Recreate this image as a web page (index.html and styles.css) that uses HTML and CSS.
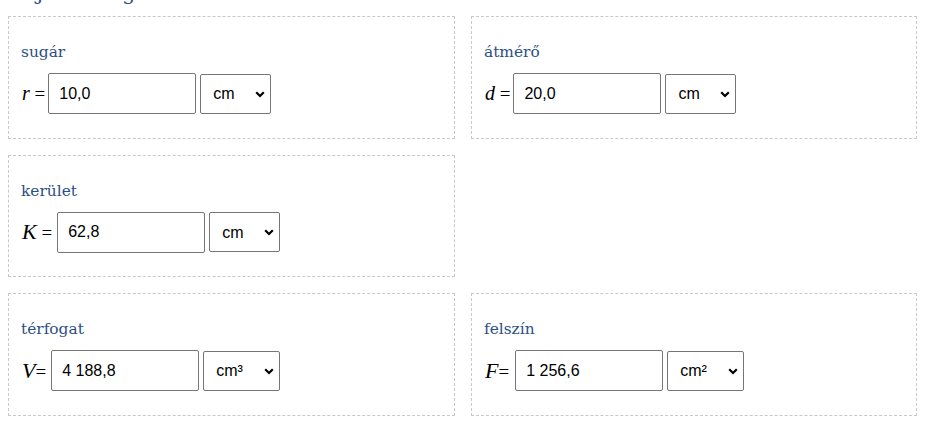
FILE: index.html
```html
<!DOCTYPE html>
<html lang="hu">
<head>
<meta charset="utf-8">
<title>Gömb</title>
<link rel="stylesheet" href="styles.css">
</head>
<body>
<h2 class="title">Adjunk meg</h2>
<div class="grid">
  <div class="card">
    <div class="label">sugár</div>
    <div class="row">
      <span class="eq"><i>r</i> =</span>
      <input class="num" type="text" value="10,0">
      <span class="sel">
        <select class="unit"><option>cm</option><option>mm</option><option>m</option></select>
        <svg class="chev" viewBox="0 0 10 7" width="10" height="7"><path d="M1.2 1.3 L5 5 L8.8 1.3" fill="none" stroke="#000" stroke-width="2.2"/></svg>
      </span>
    </div>
  </div>
  <div class="card">
    <div class="label">átmérő</div>
    <div class="row">
      <span class="eq"><i>d</i> =</span>
      <input class="num" type="text" value="20,0">
      <span class="sel">
        <select class="unit"><option>cm</option><option>mm</option><option>m</option></select>
        <svg class="chev" viewBox="0 0 10 7" width="10" height="7"><path d="M1.2 1.3 L5 5 L8.8 1.3" fill="none" stroke="#000" stroke-width="2.2"/></svg>
      </span>
    </div>
  </div>
  <div class="card">
    <div class="label">kerület</div>
    <div class="row">
      <span class="eq cap"><i>K</i> =</span>
      <input class="num" type="text" value="62,8">
      <span class="sel">
        <select class="unit"><option>cm</option><option>mm</option><option>m</option></select>
        <svg class="chev" viewBox="0 0 10 7" width="10" height="7"><path d="M1.2 1.3 L5 5 L8.8 1.3" fill="none" stroke="#000" stroke-width="2.2"/></svg>
      </span>
    </div>
  </div>
  <div class="empty"></div>
  <div class="card">
    <div class="label">térfogat</div>
    <div class="row">
      <span class="eq cap"><i>V</i>=</span>
      <input class="num" type="text" value="4 188,8">
      <span class="sel">
        <select class="unit wide"><option>cm³</option><option>mm³</option><option>m³</option></select>
        <svg class="chev" viewBox="0 0 10 7" width="10" height="7"><path d="M1.2 1.3 L5 5 L8.8 1.3" fill="none" stroke="#000" stroke-width="2.2"/></svg>
      </span>
    </div>
  </div>
  <div class="card">
    <div class="label">felszín</div>
    <div class="row">
      <span class="eq cap wider"><i>F</i>=</span>
      <input class="num" type="text" value="1 256,6">
      <span class="sel">
        <select class="unit wide"><option>cm²</option><option>mm²</option><option>m²</option></select>
        <svg class="chev" viewBox="0 0 10 7" width="10" height="7"><path d="M1.2 1.3 L5 5 L8.8 1.3" fill="none" stroke="#000" stroke-width="2.2"/></svg>
      </span>
    </div>
  </div>
</div>
</body>
</html>
```
FILE: styles.css
```css
html, body {
  margin: 0;
  padding: 0;
  background: #fff;
}
body {
  padding: 0 8px;
  overflow: hidden;
}
.title {
  font-family: "DejaVu Serif", serif;
  font-weight: normal;
  font-size: 21px;
  line-height: 24px;
  color: #2c4f85;
  margin: -19px 0 11px 0;
}
.grid {
  width: 909px;
  display: grid;
  grid-template-columns: 447px 446px;
  column-gap: 16px;
  row-gap: 16px;
}
.card {
  border: 1px dashed #c8c8c8;
  padding: 23px 12px 23px 12px;
  height: 122.5px;
  box-sizing: border-box;
}
.label {
  font-family: "DejaVu Serif", serif;
  font-size: 15.4px;
  line-height: 24px;
  color: #2c4f85;
  margin-bottom: 9px;
}
.row {
  display: flex;
  align-items: center;
  gap: 3px;
}
.eq {
  font-family: "Liberation Serif", serif;
  font-size: 19px;
  color: #000;
  white-space: nowrap;
  padding-left: 1px;
}
.eq i {
  font-style: italic;
  font-size: 20px;
  font-weight: 500;
}
.eq.cap {
  margin-right: 2px;
}
.eq.cap i {
  font-size: 22px;
}
.eq.wider {
  margin-right: 3px;
}
.num {
  width: 148px;
  height: 41px;
  box-sizing: border-box;
  border: 1px solid #767676;
  border-radius: 2px;
  padding: 0 10px;
  font-family: "Liberation Sans", Arial, sans-serif;
  font-size: 16px;
  color: #000;
  margin: 0;
}
.sel {
  position: relative;
  display: inline-flex;
  margin-left: 1px;
}
.unit {
  -webkit-appearance: none;
  appearance: none;
  width: 71px;
  height: 40px;
  box-sizing: border-box;
  border: 1px solid #767676;
  border-radius: 2px;
  padding: 0 4px 0 12px;
  font-family: "Liberation Sans", Arial, sans-serif;
  font-size: 16px;
  color: #000;
  background: #fff;
  margin: 0;
}
.unit.wide {
  width: 77px;
}
.chev {
  position: absolute;
  right: 6px;
  top: 17px;
  pointer-events: none;
}
```
